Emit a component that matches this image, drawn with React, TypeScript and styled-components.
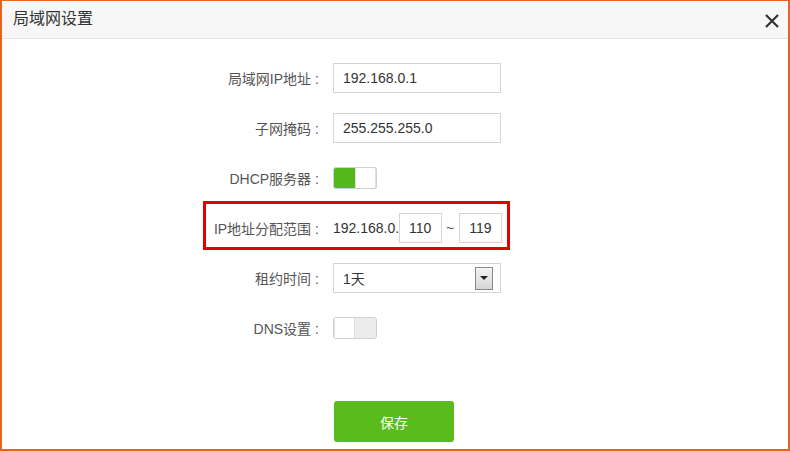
import React from 'react'
import styled, { createGlobalStyle, css } from 'styled-components'

const GlobalStyle = createGlobalStyle`
  html, body {
    margin: 0;
    padding: 0;
    background: #fff;
  }
  body {
    font-family: "Liberation Sans", "Noto Sans CJK SC", sans-serif;
    font-size: 14px;
    color: #333;
  }
`

const Dialog = styled.div`
  box-sizing: border-box;
  width: 790px;
  height: 451px;
  border: 2px solid #e8641e;
  border-top-width: 1px;
  background: #fff;
  display: flex;
  flex-direction: column;
`

const Header = styled.div`
  height: 37px;
  flex: none;
  background: #f7f7f7;
  border-bottom: 1px solid #e4e4e4;
  display: flex;
  align-items: center;
  justify-content: space-between;
  padding: 0 8px 0 11px;
`

const Title = styled.div`
  font-size: 16px;
  color: #333;
  margin-top: -5px;
`

const CloseButton = styled.div`
  width: 16px;
  height: 16px;
  display: flex;
  align-items: center;
  justify-content: center;
  margin-top: 2px;
`

const Form = styled.div`
  display: flex;
  flex-direction: column;
  padding-top: 14px;
`

const Row = styled.div<{ $highlight?: boolean }>`
  position: relative;
  height: 50px;
  display: flex;
  align-items: center;
  ${(p) =>
    p.$highlight &&
    css`
      &::after {
        content: '';
        position: absolute;
        left: 201px;
        top: -2px;
        width: 307px;
        height: 49px;
        box-sizing: border-box;
        border: 3px solid #e10000;
      }
    `}
`

const Label = styled.div`
  width: 331px;
  flex: none;
  text-align: right;
  color: #555;
  box-sizing: border-box;
`

const Colon = styled.span`
  margin: 0 14px 0 4px;
`

const TextInput = styled.div<{ $width?: number }>`
  box-sizing: border-box;
  width: ${(p) => p.$width ?? 168}px;
  flex: none;
  height: 30px;
  border: 1px solid #d4d4d4;
  display: flex;
  align-items: center;
  padding-left: 9px;
  color: #333;
  background: #fff;
`

const Prefix = styled.span`
  color: #333;
  width: 66px;
  flex: none;
`

const Tilde = styled.span`
  color: #555;
  margin: 0 5px 0 4px;
`

const Select = styled(TextInput)`
  justify-content: space-between;
  padding-right: 7px;
`

const SelectArrow = styled.div`
  box-sizing: border-box;
  width: 18px;
  height: 23px;
  border: 1px solid #8a8a8a;
  background: linear-gradient(#f4f4f4, #d6d6d6);
  display: flex;
  align-items: center;
  justify-content: center;
  &::before {
    content: '';
    border-left: 4px solid transparent;
    border-right: 4px solid transparent;
    border-top: 4px solid #222;
  }
`

const Toggle = styled.div<{ $on?: boolean }>`
  box-sizing: border-box;
  width: 44px;
  height: 22px;
  border: 1px solid #d0d0d0;
  border-radius: 3px;
  display: flex;
  overflow: hidden;
  background: ${(p) => (p.$on ? '#52b81b' : '#ececec')};
  flex-direction: ${(p) => (p.$on ? 'row-reverse' : 'row')};
`

const Knob = styled.div`
  width: 21px;
  height: 100%;
  background: #fff;
  border-left: 1px solid #e0e0e0;
  border-right: 1px solid #e0e0e0;
  box-sizing: border-box;
`

const Footer = styled.div`
  padding: 48px 0 0 332px;
`

const SaveButton = styled.button`
  width: 120px;
  height: 41px;
  border: none;
  border-radius: 3px;
  background: #5abc1c;
  color: #fff;
  font-family: "Noto Sans CJK SC", sans-serif;
  font-size: 14px;
  cursor: pointer;
`

function FieldLabel({ text }: { text: string }) {
  return (
    <Label>
      {text}
      <Colon>:</Colon>
    </Label>
  )
}

export default function App() {
  return (
    <>
      <GlobalStyle />
      <Dialog>
        <Header>
          <Title>局域网设置</Title>
          <CloseButton>
            <svg width="14" height="14" viewBox="0 0 14 14">
              <path d="M1 1 L13 13 M13 1 L1 13" stroke="#333" strokeWidth="2.2" />
            </svg>
          </CloseButton>
        </Header>
        <Form>
          <Row>
            <FieldLabel text="局域网IP地址" />
            <TextInput>192.168.0.1</TextInput>
          </Row>
          <Row>
            <FieldLabel text="子网掩码" />
            <TextInput>255.255.255.0</TextInput>
          </Row>
          <Row>
            <FieldLabel text="DHCP服务器" />
            <Toggle $on>
              <Knob />
            </Toggle>
          </Row>
          <Row $highlight>
            <FieldLabel text="IP地址分配范围" />
            <Prefix>192.168.0.</Prefix>
            <TextInput $width={43}>110</TextInput>
            <Tilde>~</Tilde>
            <TextInput $width={43}>119</TextInput>
          </Row>
          <Row>
            <FieldLabel text="租约时间" />
            <Select>
              <span>1天</span>
              <SelectArrow />
            </Select>
          </Row>
          <Row>
            <FieldLabel text="DNS设置" />
            <Toggle>
              <Knob />
            </Toggle>
          </Row>
        </Form>
        <Footer>
          <SaveButton>保存</SaveButton>
        </Footer>
      </Dialog>
    </>
  )
}
